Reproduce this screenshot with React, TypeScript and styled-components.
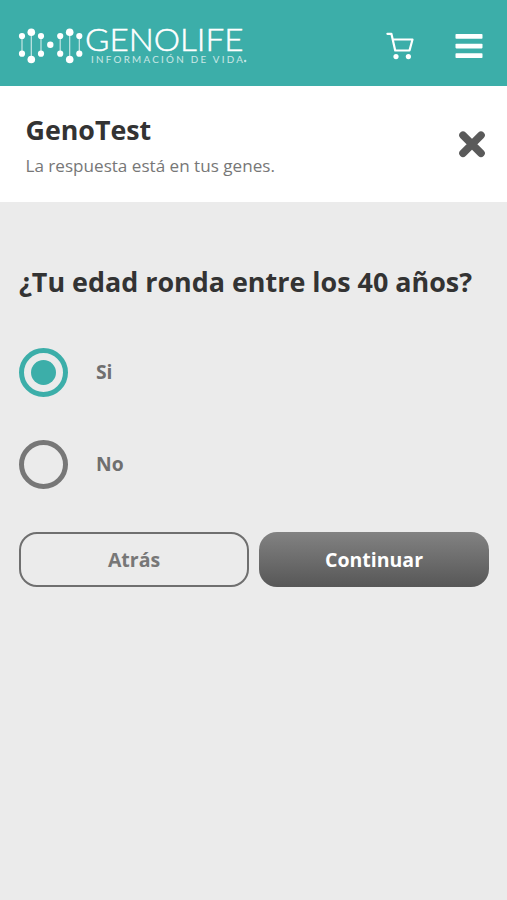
import React, { useState } from "react";
import styled, { createGlobalStyle } from "styled-components";

const teal = "#3caea9";
const gray = "#6f6f6f";

const GlobalStyle = createGlobalStyle`
  *, *::before, *::after { box-sizing: border-box; }
  body {
    margin: 0;
    background: #ebebeb;
    font-family: "Open Sans", "Noto Sans", sans-serif;
  }
`;

const Page = styled.div`
  min-height: 900px;
  background: #ebebeb;
`;

const TopBar = styled.header`
  display: flex;
  align-items: center;
  height: 86px;
  background: ${teal};
`;

const LogoArt = styled.svg`
  display: block;
  margin-right: auto;
`;

const IconButton = styled.button<{ $gap?: number }>`
  display: flex;
  padding: 0;
  border: 0;
  background: none;
  cursor: pointer;
  margin-right: ${(p) => p.$gap ?? 0}px;
`;

const TopBarButton = styled(IconButton)`
  padding-top: 6px;
`;

const TestHeader = styled.section`
  display: flex;
  align-items: center;
  justify-content: space-between;
  height: 116px;
  padding: 0 22px 0 25.5px;
  background: #fff;
`;

const Title = styled.h1`
  margin: 2px 0 6px;
  font-size: 26.8px;
  line-height: 36px;
  font-weight: 700;
  color: #333;
`;

const Subtitle = styled.p`
  margin: 0;
  font-size: 17.1px;
  line-height: 24px;
  color: #777;
`;

const Question = styled.h2`
  margin: 0;
  font-size: 26.9px;
  line-height: 36px;
  font-weight: 700;
  color: #333;
  white-space: nowrap;
`;

const Quiz = styled.main`
  padding: 62px 18px 0 19px;
`;

const Options = styled.div`
  display: flex;
  flex-direction: column;
  gap: 43px;
  margin-top: 48px;
`;

const Option = styled.button`
  display: flex;
  align-items: center;
  align-self: flex-start;
  gap: 28px;
  padding: 0;
  border: 0;
  background: none;
  font: 700 19.3px/26px "Open Sans", "Noto Sans", sans-serif;
  color: ${gray};
  cursor: pointer;
`;

const OptionLabel = styled.span`
  padding-bottom: 2px;
`;

const Ring = styled.span<{ $on: boolean }>`
  display: grid;
  place-items: center;
  width: 49px;
  height: 49px;
  border: 5px solid ${(p) => (p.$on ? teal : "#777")};
  border-radius: 50%;

  &::after {
    content: "";
    width: 25px;
    height: 25px;
    border-radius: 50%;
    background: ${(p) => (p.$on ? teal : "transparent")};
  }
`;

const Actions = styled.div`
  display: grid;
  grid-template-columns: 1fr 1fr;
  gap: 10px;
  margin-top: 42.5px;
`;

const ActionButton = styled.button<{ $filled?: boolean }>`
  height: 55px;
  padding: 1px 0 0;
  border: ${(p) => (p.$filled ? "0" : "2px solid #6f6f6f")};
  border-radius: 18px;
  background: ${(p) => (p.$filled ? "linear-gradient(#828282, #575757)" : "transparent")};
  color: ${(p) => (p.$filled ? "#fff" : "#777")};
  font: 700 19.5px/26px "Open Sans", "Noto Sans", sans-serif;
  cursor: pointer;
`;

const strands = [
  { x: 22, top: 36, bottom: 53.7, r: 3.1 },
  { x: 31.3, top: 32.3, bottom: 59.5, r: 3.8 },
  { x: 41, top: 36, bottom: 53.7, r: 3.1 },
  { x: 60.2, top: 36, bottom: 53.7, r: 3.1 },
  { x: 69.7, top: 32.3, bottom: 59.5, r: 3.8 },
  { x: 79.3, top: 36, bottom: 53.7, r: 3.1 },
];

function Logo() {
  return (
    <LogoArt width="260" height="86" viewBox="0 0 260 86" fill="#fff" role="img" aria-label="Genolife">
      {strands.map((s) => (
        <g key={s.x}>
          <line x1={s.x} x2={s.x} y1={s.top} y2={s.bottom} stroke="#fff" strokeWidth="1.2" opacity=".7" />
          <circle cx={s.x} cy={s.top} r={s.r} />
          <circle cx={s.x} cy={s.bottom} r={s.r} />
        </g>
      ))}
      <circle cx="50.3" cy="44.8" r="3.2" />
      <text x="85" y="50.6" fontFamily="Lato, sans-serif" fontWeight="300" fontSize="32" textLength="158.5" lengthAdjust="spacingAndGlyphs" stroke="#fff" strokeWidth=".5">
        GENOLIFE
      </text>
      <text x="91" y="62.8" fontFamily="Lato, sans-serif" fontSize="9.8" textLength="152" lengthAdjust="spacing" opacity=".72">
        INFORMACIÓN DE VIDA
      </text>
      <circle cx="245.2" cy="61" r="1.2" opacity=".7" />
    </LogoArt>
  );
}

export default function App() {
  const [answer, setAnswer] = useState("Si");
  return (
    <Page>
      <GlobalStyle />
      <TopBar>
        <Logo />
        <TopBarButton $gap={41} aria-label="Carrito">
          <svg width="28" height="28" viewBox="0 0 28 28" fill="none" stroke="#fff" strokeWidth="2.2" strokeLinecap="round" strokeLinejoin="round">
            <path d="M1.4 1.8H5.4L9.2 18.5H23.5L26.5 7.5H6.8" />
            <circle cx="10" cy="24.6" r="2.6" fill="#fff" stroke="none" />
            <circle cx="22.4" cy="24.6" r="2.6" fill="#fff" stroke="none" />
          </svg>
        </TopBarButton>
        <TopBarButton $gap={24} aria-label="Menú">
          <svg width="28" height="28" viewBox="0 0 28 28" fill="#fff">
            <rect x=".5" y="2" width="27" height="4.7" rx=".8" />
            <rect x=".5" y="11.7" width="27" height="4.7" rx=".8" />
            <rect x=".5" y="21.3" width="27" height="4.7" rx=".8" />
          </svg>
        </TopBarButton>
      </TopBar>
      <TestHeader>
        <div>
          <Title>GenoTest</Title>
          <Subtitle>La respuesta está en tus genes.</Subtitle>
        </div>
        <IconButton aria-label="Cerrar">
          <svg width="27" height="27" viewBox="0 0 27 27" stroke="#5a5a5a" strokeWidth="7.6" strokeLinecap="round">
            <path d="M5 4.2L23 22.2M23 4.2L5 22.2" />
          </svg>
        </IconButton>
      </TestHeader>
      <Quiz>
        <Question>¿Tu edad ronda entre los 40 años?</Question>
        <Options role="radiogroup">
          {["Si", "No"].map((label) => (
            <Option key={label} role="radio" aria-checked={answer === label} onClick={() => setAnswer(label)}>
              <Ring $on={answer === label} />
              <OptionLabel>{label}</OptionLabel>
            </Option>
          ))}
        </Options>
        <Actions>
          <ActionButton>Atrás</ActionButton>
          <ActionButton $filled>Continuar</ActionButton>
        </Actions>
      </Quiz>
    </Page>
  );
}
